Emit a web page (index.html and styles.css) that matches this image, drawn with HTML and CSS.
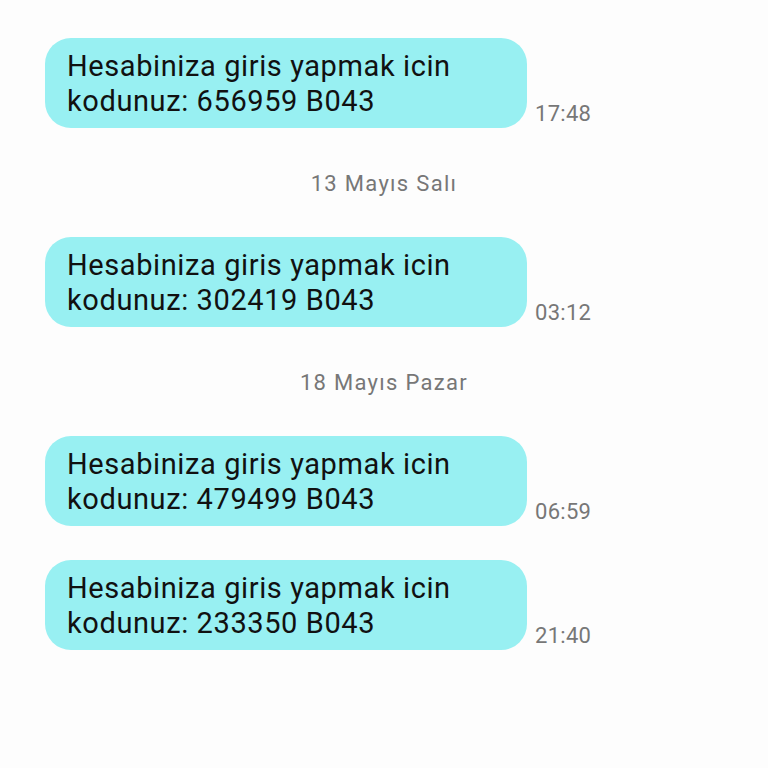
FILE: index.html
```html
<!DOCTYPE html>
<html>
<head>
<meta charset="utf-8">
<link rel="stylesheet" href="styles.css">
</head>
<body>
<div class="thread">
  <div class="msg">
    <div class="bubble">Hesabiniza giris yapmak icin<br>kodunuz: 656959 B043</div>
    <div class="time">17:48</div>
  </div>
  <div class="date">13 Mayıs Salı</div>
  <div class="msg">
    <div class="bubble">Hesabiniza giris yapmak icin<br>kodunuz: 302419 B043</div>
    <div class="time">03:12</div>
  </div>
  <div class="date">18 Mayıs Pazar</div>
  <div class="msg">
    <div class="bubble">Hesabiniza giris yapmak icin<br>kodunuz: 479499 B043</div>
    <div class="time">06:59</div>
  </div>
  <div class="msg m4">
    <div class="bubble">Hesabiniza giris yapmak icin<br>kodunuz: 233350 B043</div>
    <div class="time">21:40</div>
  </div>
</div>
</body>
</html>
```
FILE: styles.css
```css
html, body {
  margin: 0;
  padding: 0;
  background: #fdfdfd;
  width: 768px;
  height: 768px;
  overflow: hidden;
}
.thread {
  display: flex;
  flex-direction: column;
  padding-top: 38px;
  font-family: Roboto, "Liberation Sans", sans-serif;
}
.msg {
  display: flex;
  align-items: flex-end;
  padding-left: 45px;
}
.m4 {
  margin-top: 34px;
}
.bubble {
  box-sizing: border-box;
  width: 482px;
  height: 90px;
  background: #98f0f2;
  border-radius: 26px;
  padding: 11px 22px 0 22px;
  font-size: 29px;
  line-height: 35px;
  letter-spacing: 0.6px;
  color: #111;
}
.time {
  margin-left: 8px;
  margin-bottom: 2px;
  font-size: 22px;
  line-height: 24px;
  letter-spacing: 0.3px;
  color: #777;
}
.date {
  height: 109px;
  display: flex;
  align-items: center;
  justify-content: center;
  font-size: 22px;
  letter-spacing: 1.3px;
  color: #777;
  padding-top: 2px;
  box-sizing: border-box;
}
```
